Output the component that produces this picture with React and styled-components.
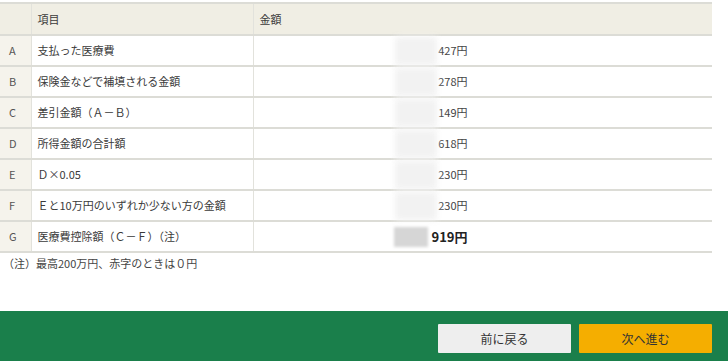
import React from "react";
import styled, { createGlobalStyle } from "styled-components";

const Global = createGlobalStyle`
  html, body { margin: 0; padding: 0; background: #fff; }
  body {
    font-family: "Noto Sans CJK JP", "Noto Sans", sans-serif;
    font-size: 11px;
    color: #3a3a3a;
  }
`;

const Page = styled.div`
  width: 728px;
  height: 361px;
  display: flex;
  flex-direction: column;
  overflow: hidden;
`;

const Content = styled.div`
  flex: 1;
  padding-top: 2px;
`;

const Table = styled.table`
  width: 712px;
  border-collapse: collapse;
  table-layout: fixed;
  border-top: 2px solid #dcdcd6;
`;

const HeadCell = styled.th`
  background: #f0eee4;
  font-weight: normal;
  text-align: left;
  height: 30px;
  padding: 0 0 0 6px;
  border-bottom: 2px solid #dcdcd6;
  border-left: ${(p) => (p.$first ? "none" : "1px solid #e2e2dc")};
  line-height: 1;
`;

const LetterCell = styled.td`
  background: #f5f3ec;
  height: 29px;
  padding: 0 0 0 9px;
  border-bottom: 2px solid #dcdcd6;
  line-height: 1;
  color: #555;
`;

const LabelCell = styled.td`
  height: 29px;
  padding: 0 0 0 6px;
  border-bottom: 2px solid #dcdcd6;
  border-left: 1px solid #e2e2dc;
  line-height: 1;
  white-space: nowrap;
`;

const ValueCell = styled.td`
  height: 29px;
  padding: 0;
  border-bottom: 2px solid #dcdcd6;
  border-left: 1px solid #e2e2dc;
  line-height: 1;
`;

const Amount = styled.div`
  display: flex;
  align-items: center;
  justify-content: flex-end;
  width: 214px;
  font-size: ${(p) => (p.$total ? "13px" : "11px")};
  font-weight: ${(p) => (p.$total ? "bold" : "normal")};
  color: ${(p) => (p.$total ? "#222" : "#444")};
`;

/* masked digits, shown as a soft block */
const Masked = styled.span`
  display: inline-block;
  width: ${(p) => (p.$total ? "34px" : "42px")};
  height: ${(p) => (p.$total ? "20px" : "28px")};
  margin-right: ${(p) => (p.$total ? "3px" : "1px")};
  background: ${(p) => (p.$total ? "#d6d6d6" : "#f2f2f2")};
  filter: blur(${(p) => (p.$total ? "1.5px" : "3px")});
`;

const Note = styled.p`
  margin: 5px 0 0 3px;
  font-size: 11px;
  color: #444;
  line-height: 1;
`;

const Footer = styled.div`
  height: 50px;
  background: #1a7f4b;
  display: flex;
  align-items: center;
  justify-content: flex-end;
  gap: 8px;
  padding: 0 16px 0 0;
`;

const Button = styled.button`
  width: 133px;
  height: 29px;
  margin-top: 4px;
  border: none;
  border-radius: 1px;
  font-family: inherit;
  font-size: 12px;
  color: #333;
  background: ${(p) => (p.$primary ? "#f5ae00" : "#eeeeee")};
  cursor: pointer;
`;

const rows = [
  ["A", "支払った医療費", "427円"],
  ["B", "保険金などで補填される金額", "278円"],
  ["C", "差引金額（Ａ－Ｂ）", "149円"],
  ["D", "所得金額の合計額", "618円"],
  ["E", "Ｄ×0.05", "230円"],
  ["F", "Ｅと10万円のいずれか少ない方の金額", "230円"],
  ["G", "医療費控除額（Ｃ－Ｆ）（注）", "919円", true],
];

export default function App() {
  return (
    <Page>
      <Global />
      <Content>
        <Table>
          <colgroup>
            <col style={{ width: 31 }} />
            <col style={{ width: 222 }} />
            <col />
          </colgroup>
          <thead>
            <tr>
              <HeadCell $first />
              <HeadCell>項目</HeadCell>
              <HeadCell>金額</HeadCell>
            </tr>
          </thead>
          <tbody>
            {rows.map(([key, label, value, total]) => (
              <tr key={key}>
                <LetterCell>{key}</LetterCell>
                <LabelCell>{label}</LabelCell>
                <ValueCell>
                  <Amount $total={total}>
                    <Masked $total={total} />
                    {value}
                  </Amount>
                </ValueCell>
              </tr>
            ))}
          </tbody>
        </Table>
        <Note>（注）最高200万円、赤字のときは０円</Note>
      </Content>
      <Footer>
        <Button>前に戻る</Button>
        <Button $primary>次へ進む</Button>
      </Footer>
    </Page>
  );
}
